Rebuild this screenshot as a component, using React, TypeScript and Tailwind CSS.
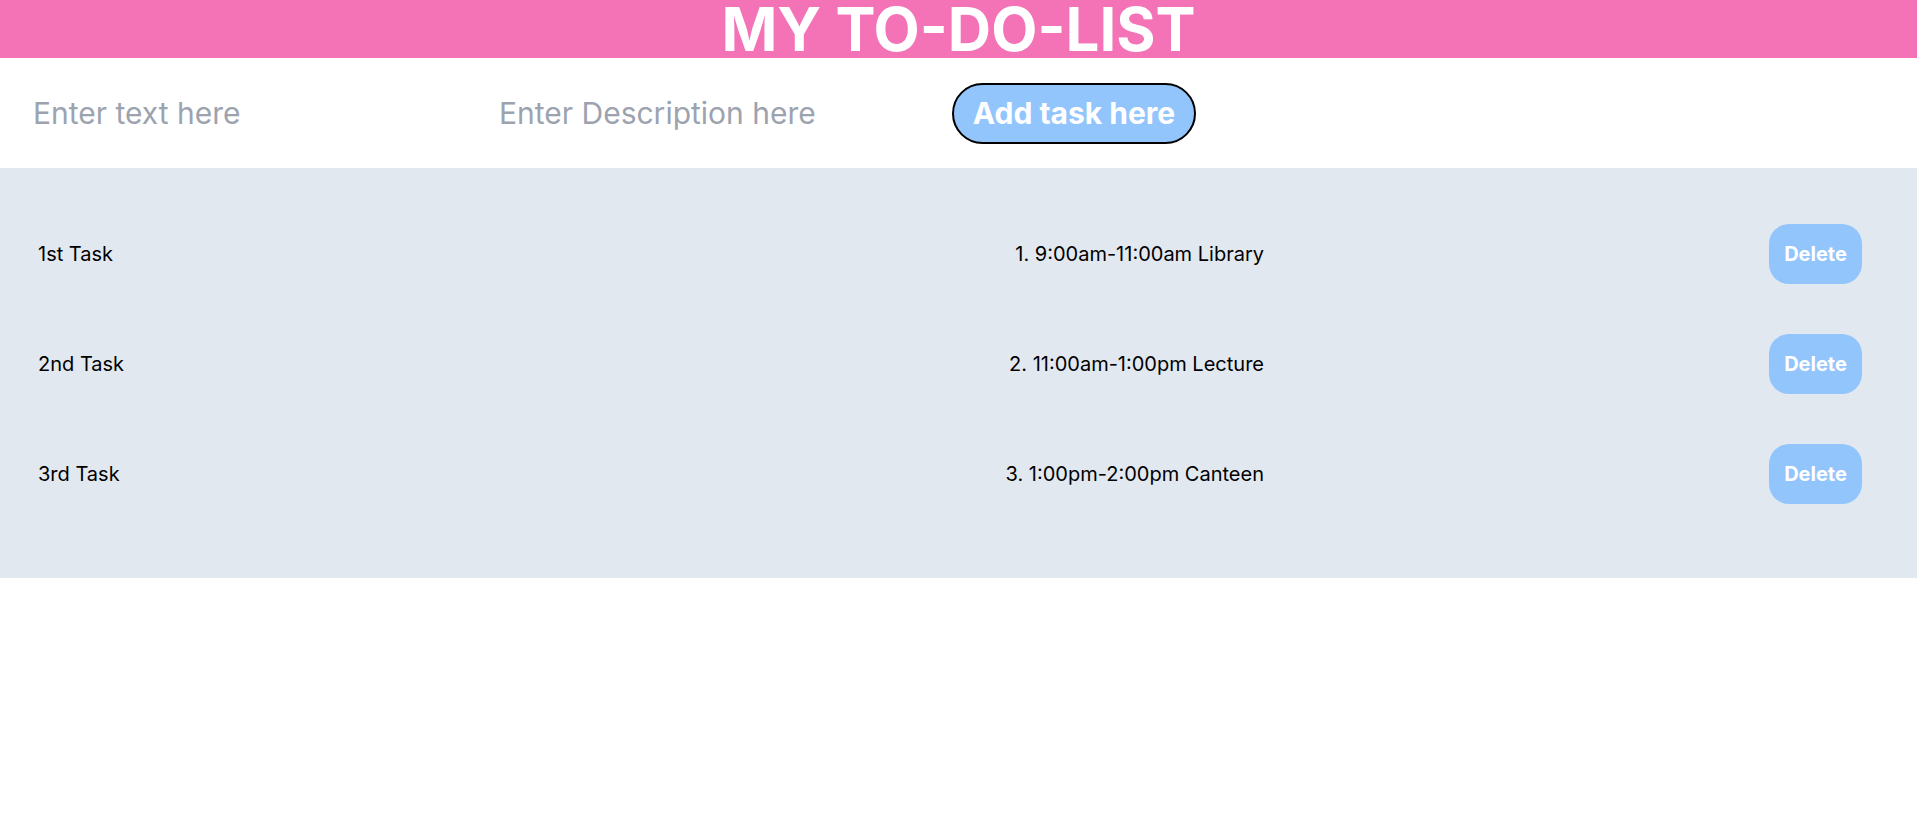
import React from "react";

const tasks = [
  { title: "1st Task", desc: "1. 9:00am-11:00am Library" },
  { title: "2nd Task", desc: "2. 11:00am-1:00pm Lecture" },
  { title: "3rd Task", desc: "3. 1:00pm-2:00pm Canteen" },
];

export default function App() {
  return (
    <div className="min-h-screen bg-white font-['Inter',sans-serif]">
      <header className="h-[58px] bg-[#f472b6] flex items-center justify-center">
        <h1 className="text-[60px] leading-[58px] font-bold text-white">MY TO-DO-LIST</h1>
      </header>
      <div className="h-[110px] flex items-center pl-[33px]">
        <input
          className="w-[466px] text-[30px] outline-none placeholder:text-[#9ca3af] bg-transparent"
          placeholder="Enter text here"
        />
        <input
          className="w-[453px] text-[30px] outline-none placeholder:text-[#9ca3af] bg-transparent"
          placeholder="Enter Description here"
        />
        <button className="h-[61px] w-[244px] rounded-full border-2 border-black bg-[#93c5fd] text-white text-[30px] font-bold flex items-center justify-center">
          Add task here
        </button>
      </div>
      <div className="bg-[#e2e8f0] pt-[56px] pb-[74px] flex flex-col gap-[50px]">
        {tasks.map((t) => (
          <div key={t.title} className="h-[60px] flex items-center pl-[38px] pr-[55px] text-black text-[20px]">
            <span className="w-[600px]">{t.title}</span>
            <span className="w-[626px] text-right">{t.desc}</span>
            <button className="ml-auto w-[93px] h-[60px] rounded-[20px] bg-[#93c5fd] text-white font-bold text-[20px] flex items-center justify-center">
              Delete
            </button>
          </div>
        ))}
      </div>
    </div>
  );
}
